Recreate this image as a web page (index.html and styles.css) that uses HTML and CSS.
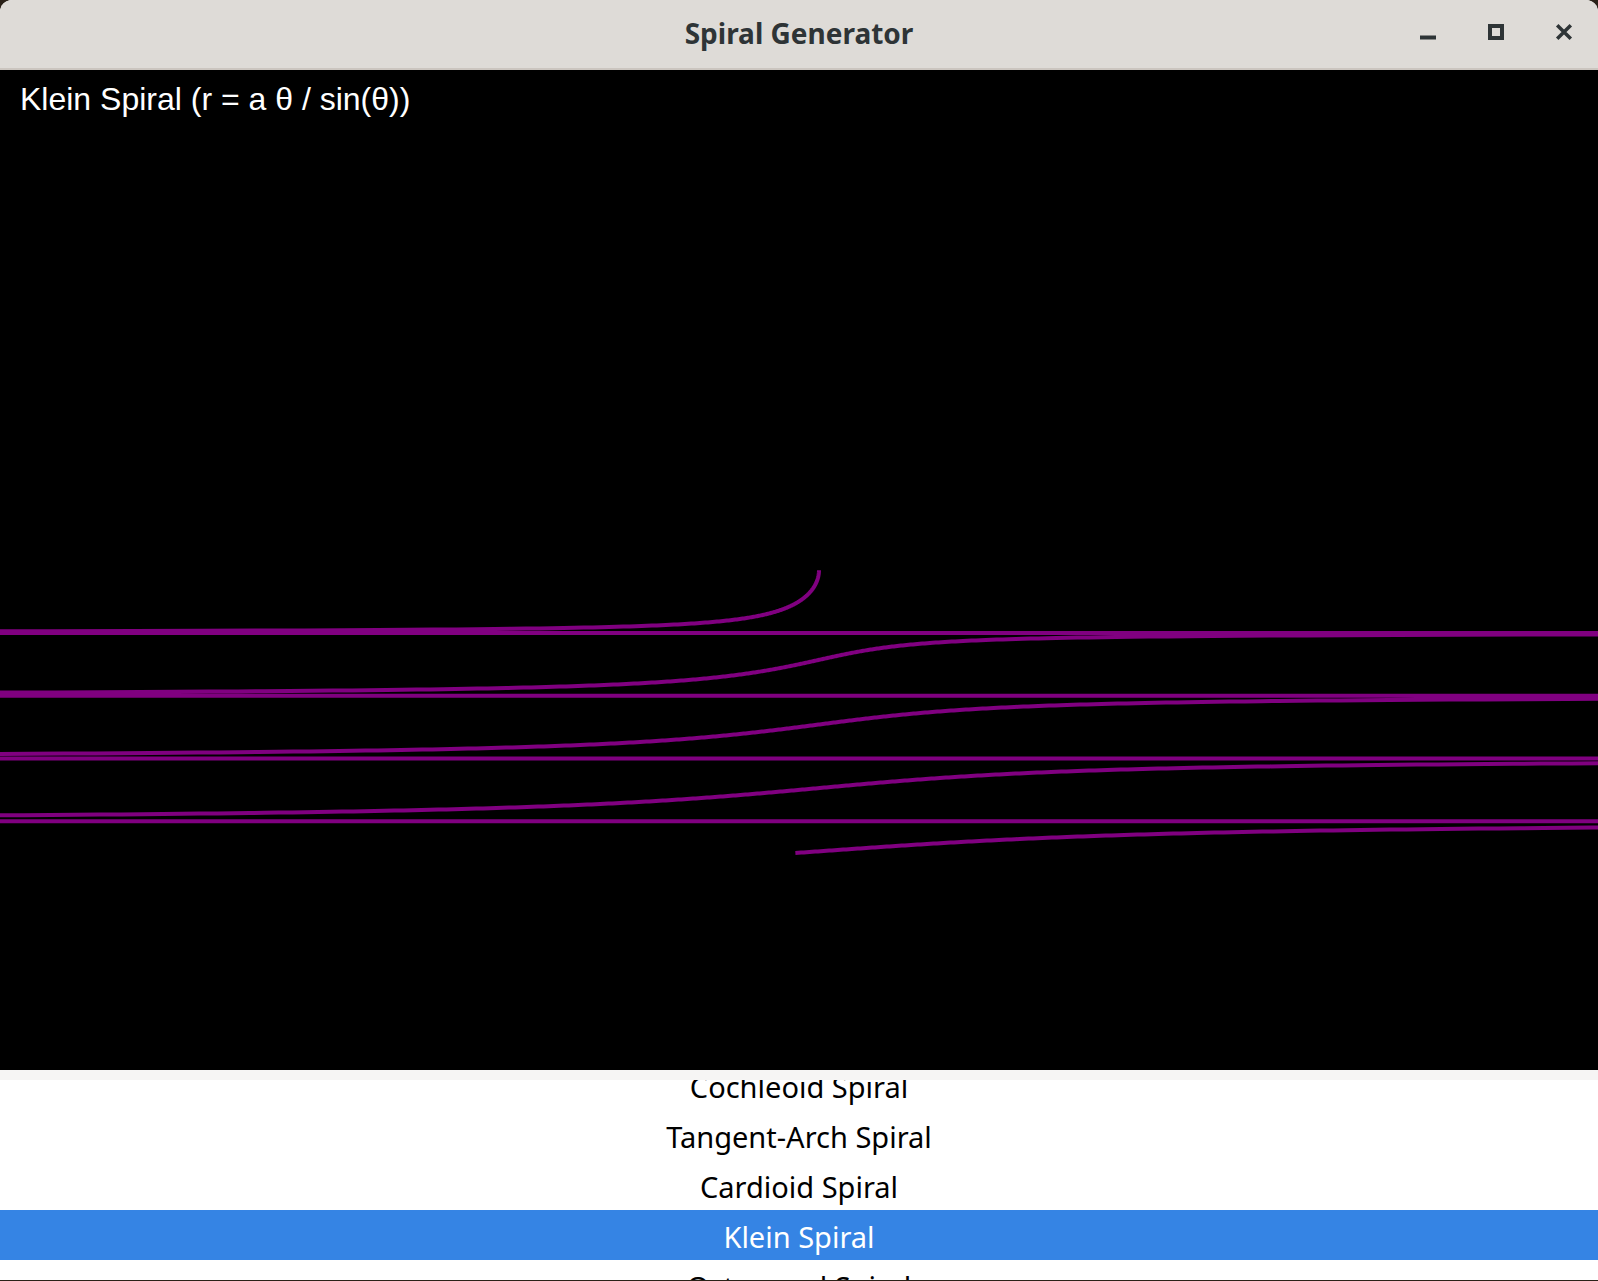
FILE: index.html
```html
<!DOCTYPE html>
<html lang="en">
<head>
<meta charset="utf-8">
<title>Spiral Generator</title>
<link rel="stylesheet" href="styles.css">
</head>
<body>
<div class="window">
  <header class="titlebar">
    <div class="spacer"></div>
    <div class="title">Spiral Generator</div>
    <div class="controls">
      <div class="ctl">
        <svg class="icon" viewBox="0 0 18 18" width="18" height="18"><rect x="1" y="12.5" width="16" height="4" fill="#2e3436"/></svg>
      </div>
      <div class="ctl">
        <svg class="icon" viewBox="0 0 18 18" width="18" height="18"><rect x="3" y="3" width="12" height="12" fill="none" stroke="#2e3436" stroke-width="4"/></svg>
      </div>
      <div class="ctl">
        <svg class="icon" viewBox="0 0 18 18" width="18" height="18"><path d="M2.2 2.2 L15.8 15.8 M15.8 2.2 L2.2 15.8" stroke="#2e3436" stroke-width="3.5" fill="none"/></svg>
      </div>
    </div>
  </header>
  <main class="canvas">
    <svg class="plot" viewBox="0 0 1598 1000" width="1598" height="1000"><path id="spiral" class="spiral" d=""/></svg>
    <div class="label">Klein Spiral (r = a θ / sin(θ))</div>
  </main>
  <div class="strip"></div>
  <div class="list">
    <div class="list-inner">
      <div class="row">Cochleoid Spiral</div>
      <div class="row">Tangent-Arch Spiral</div>
      <div class="row">Cardioid Spiral</div>
      <div class="row selected">Klein Spiral</div>
      <div class="row">Octagonal Spiral</div>
    </div>
  </div>
</div>
<script src="script.js"></script>
</body>
</html>
```

FILE: styles.css
```css
html, body {
  margin: 0;
  padding: 0;
}
body {
  background: #2a2118;
  width: 1598px;
  height: 1281px;
  overflow: hidden;
}
.window {
  width: 1598px;
  height: 1280px;
  display: flex;
  flex-direction: column;
  border-radius: 12px 12px 0 0;
  overflow: hidden;
  background: #ffffff;
}
.titlebar {
  height: 68px;
  flex: 0 0 68px;
  background: #dedbd7;
  border-bottom: 2px solid #cbc5bf;
  display: grid;
  grid-template-columns: 1fr auto 1fr;
  align-items: center;
}
.title {
  font-family: "Noto Sans", "Open Sans", sans-serif;
  font-weight: 700;
  font-size: 28px;
  color: #2e3436;
  padding-bottom: 2px;
}
.controls {
  display: flex;
  justify-content: flex-end;
  height: 68px;
}
.ctl {
  width: 68px;
  height: 68px;
  display: flex;
  align-items: center;
  justify-content: center;
}
.icon {
  display: block;
  margin-bottom: 4px;
}
.canvas {
  height: 1000px;
  flex: 0 0 1000px;
  background: #000000;
  position: relative;
  overflow: hidden;
}
.plot {
  position: absolute;
  left: 0;
  top: 0;
  display: block;
}
.spiral {
  fill: none;
  stroke: #800080;
  stroke-width: 4;
  stroke-linejoin: round;
}
.label {
  position: relative;
  padding: 11px 0 0 20px;
  font-family: "Liberation Sans", Arial, sans-serif;
  font-size: 32px;
  color: #ffffff;
}
.strip {
  height: 10px;
  flex: 0 0 10px;
  background: #f6f5f4;
}
.list {
  flex: 1 1 auto;
  overflow: hidden;
  background: #ffffff;
}
.list-inner {
  margin-top: -20px;
}
.row {
  height: 50px;
  line-height: 54px;
  text-align: center;
  font-family: "Noto Sans", "Open Sans", sans-serif;
  font-size: 29px;
  color: #000000;
}
.row.selected {
  background: #3584e4;
  color: #ffffff;
}
```

FILE: script.js
```js
(function () {
  var path = document.getElementById('spiral');
  var cx = 799, cy = 500, a = 20, step = 0.01;
  var max = 4.5 * Math.PI + 0.015;
  var d = '';
  for (var i = 1; i * step <= max; i++) {
    var t = i * step;
    var r = a * t / Math.sin(t);
    var x = cx + r * Math.cos(t);
    var y = cy + r * Math.sin(t);
    d += (i === 1 ? 'M' : 'L') + x.toFixed(2) + ' ' + y.toFixed(2);
  }
  path.setAttribute('d', d);
})();
```
